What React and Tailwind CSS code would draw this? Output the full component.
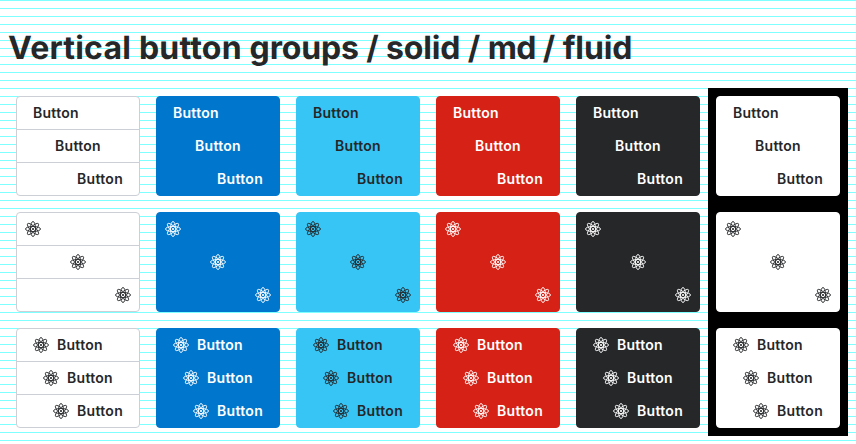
import React from 'react';

const GROUPS = [
  { fill: 'bg-white text-[#252729] border-[#cdcfd6]' },
  { fill: 'bg-[#0077cc] text-white border-[#0077cc]' },
  { fill: 'bg-[#36c5f4] text-[#252729] border-[#36c5f4]' },
  { fill: 'bg-[#d52116] text-white border-[#d52116]' },
  { fill: 'bg-[#252729] text-white border-[#252729]' },
  { fill: 'bg-white text-[#252729] border-white', inverse: true },
];
const ROWS = ['text', 'icon', 'both'];
const ALIGN = ['justify-start', 'justify-center', 'justify-end'];

function AtomIcon() {
  return (
    <svg className="size-4 shrink-0" viewBox="0 0 16 16" fill="none" stroke="currentColor" strokeWidth="0.9">
      {[0, 45, 90, 135].map((a) => (
        <ellipse key={a} cx="8" cy="8" rx="7.55" ry="2.5" transform={`rotate(${a} 8 8)`} />
      ))}
      <circle cx="8" cy="8" r="1.1" fill="currentColor" stroke="none" />
    </svg>
  );
}

function ButtonGroup({ kind, fill }) {
  return (
    <div className="flex flex-col w-[124px]">
      {ALIGN.map((align) => (
        <button
          key={align}
          className={`flex h-[34px] items-center gap-2 border text-sm font-semibold tracking-[0.28px] -mt-px first:mt-0 first:rounded-t last:rounded-b ${kind === 'icon' ? 'px-2' : 'px-4'} ${align} ${fill}`}
        >
          {kind !== 'text' && <AtomIcon />}
          {kind !== 'icon' && <span>Button</span>}
        </button>
      ))}
    </div>
  );
}

export default function App() {
  return (
    <div className="h-[444px] w-[856px] overflow-hidden bg-[repeating-linear-gradient(to_bottom,#7fffff_0px,#7fffff_1px,#ffffff_1px,#ffffff_8px)] font-['Inter',sans-serif] [text-rendering:geometricPrecision] px-2 pt-7">
      <h1 className="h-[60px] text-[32px] leading-10 font-bold text-[#252729] whitespace-nowrap">
        <span className="tracking-[0.21px]">Vertical button </span>
        <span className="tracking-[-0.14px]">groups / solid </span>/ <span className="tracking-[-0.7px]">md </span>/{' '}
        <span className="tracking-[-0.1px]">fluid</span>
      </h1>
      <div className="flex">
        {GROUPS.map(({ fill, inverse }) => (
          <div key={fill} className={`flex w-[140px] flex-col gap-4 p-2 ${inverse ? 'bg-black' : ''}`}>
            {ROWS.map((kind) => (
              <ButtonGroup key={kind} kind={kind} fill={fill} />
            ))}
          </div>
        ))}
      </div>
    </div>
  );
}
